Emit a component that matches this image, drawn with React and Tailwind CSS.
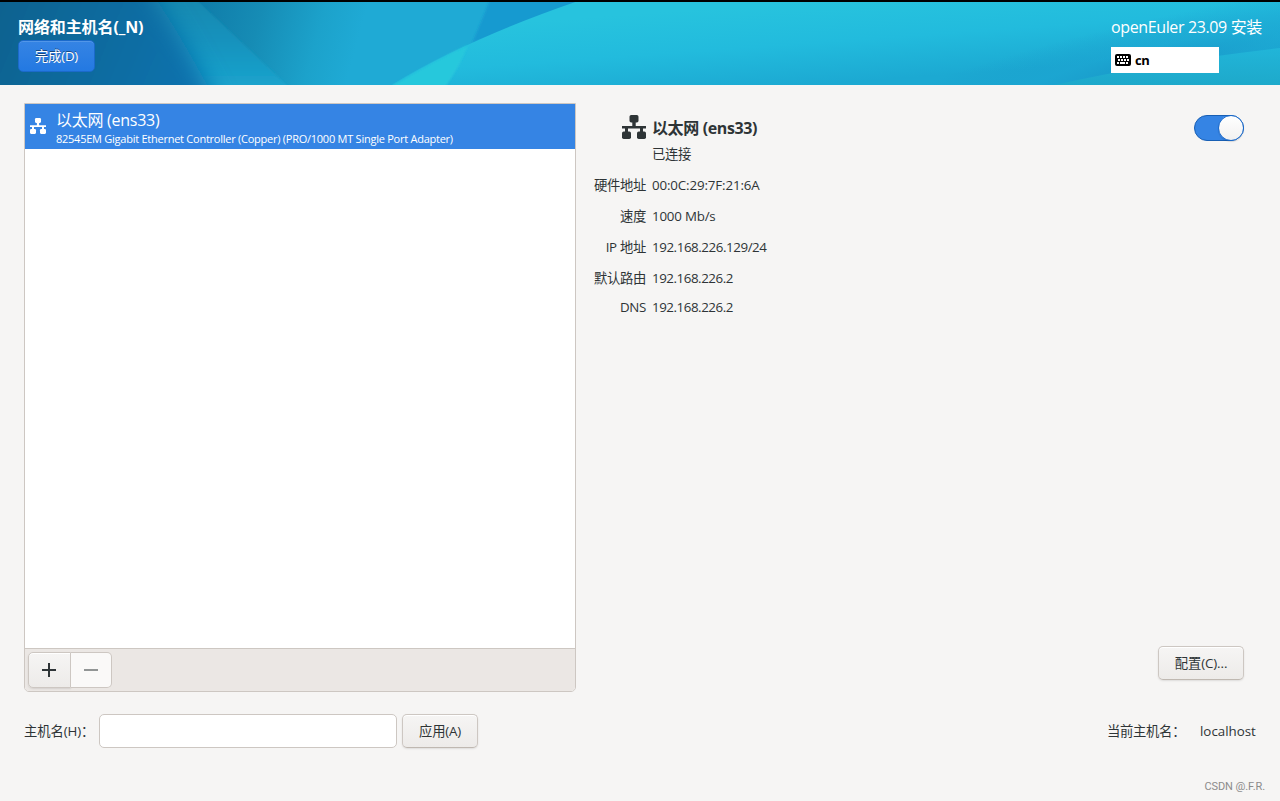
import React from "react";

const details = [
  { label: "硬件地址", value: "00:0C:29:7F:21:6A", row: "h-[31px]", spacing: "tracking-[-0.13px]" },
  { label: "速度", value: "1000 Mb/s", row: "h-[31px]", spacing: "tracking-[-0.2px]" },
  { label: "IP 地址", value: "192.168.226.129/24", row: "h-[31px]", spacing: "tracking-[-0.42px]" },
  { label: "默认路由", value: "192.168.226.2", row: "h-[31px]", spacing: "tracking-[-0.45px]" },
  { label: "DNS", value: "192.168.226.2", row: "h-[27px]", spacing: "tracking-[-0.45px]" },
];

const buttonLook =
  "flex items-center justify-center rounded-[5px] border border-[#cdc7c2] border-b-[#bfb8b1] bg-linear-to-b from-[#f6f5f4] to-[#edebe9] shadow-[0_1px_2px_rgba(0,0,0,0.1),inset_0_1px_0_#ffffff]";

function WiredIcon({ className }) {
  return (
    <svg className={className} viewBox="0 0 24 24" fill="currentColor" aria-hidden="true">
      <rect x="7.5" y="0" width="9" height="7.5" rx="1.7" />
      <rect x="0" y="16.5" width="9" height="7.5" rx="1.7" />
      <rect x="15" y="16.5" width="9" height="7.5" rx="1.7" />
      <path d="M10.3 7h3.4v4H24v2.4h-3v3.6h-3v-3.6H6v3.6H3v-3.6H0V11h10.3z" />
    </svg>
  );
}

function KeyboardIcon() {
  return (
    <svg className="h-3 w-4" viewBox="0 0 16 12" aria-hidden="true">
      <rect width="16" height="12" rx="2" fill="#000" />
      <path
        fill="#fff"
        d="M2 2h2v2H2zM5 2h2v2H5zM8 2h2v2H8zM11 2h2v2h-2zM3 5h2v2H3zM6 5h2v2H6zM9 5h2v2H9zM12 5h2v2h-2zM2 8h2v2H2zM5 8h5v2H5zM11 8h2v2h-2z"
      />
    </svg>
  );
}

function HeaderArt() {
  return (
    <svg className="absolute inset-0 h-full w-full" viewBox="0 0 1280 83" preserveAspectRatio="none" aria-hidden="true">
      <defs>
        <linearGradient id="base" gradientUnits="userSpaceOnUse" x1="150" y1="30" x2="345" y2="85">
          <stop offset="0" stopColor="#0c6fa4" />
          <stop offset="0.27" stopColor="#1180ac" />
          <stop offset="0.5" stopColor="#168cb5" />
          <stop offset="0.8" stopColor="#1ca2cb" />
          <stop offset="1" stopColor="#1faad5" />
        </linearGradient>
        <linearGradient id="beam" x1="0" y1="0" x2="0" y2="1">
          <stop offset="0" stopColor="#1387ad" />
          <stop offset="0.5" stopColor="#1692bd" />
          <stop offset="1" stopColor="#1ba5ce" />
        </linearGradient>
        <linearGradient id="deep" gradientUnits="userSpaceOnUse" x1="0" y1="0" x2="200" y2="83">
          <stop offset="0" stopColor="#09628f" />
          <stop offset="0.5" stopColor="#0b6b9f" />
          <stop offset="1" stopColor="#0c72ae" />
        </linearGradient>
        <linearGradient id="swell" gradientUnits="userSpaceOnUse" x1="800" y1="0" x2="806" y2="83">
          <stop offset="0" stopColor="#27c3de" />
          <stop offset="0.5" stopColor="#22bbdd" />
          <stop offset="1" stopColor="#1ca9d2" />
        </linearGradient>
        <linearGradient id="corner" x1="0" y1="0" x2="0" y2="1">
          <stop offset="0" stopColor="#22b8da" />
          <stop offset="1" stopColor="#1ea9c9" />
        </linearGradient>
        <radialGradient id="dim" gradientUnits="userSpaceOnUse" cx="0" cy="0" r="1" gradientTransform="translate(1150 64) rotate(-13) scale(330 46)">
          <stop offset="0" stopColor="#1894c6" stopOpacity="0.75" />
          <stop offset="0.4" stopColor="#1ba0d0" stopOpacity="0.4" />
          <stop offset="1" stopColor="#1790c4" stopOpacity="0" />
        </radialGradient>
        <filter id="soft" x="-20%" y="-50%" width="140%" height="200%">
          <feGaussianBlur stdDeviation="11" />
        </filter>
        <filter id="edge">
          <feGaussianBlur stdDeviation="1" />
        </filter>
      </defs>
      <rect width="1280" height="83" fill="url(#base)" />
      <path d="M100-12H186Q238 37 292 88H100z" fill="url(#beam)" filter="url(#edge)" />
      <path d="M-60-60H125L158 0Q188 45 232 130H-60z" fill="url(#deep)" filter="url(#soft)" />
      <path d="M491-5H595V5Q525 22 472 41Q482 18 491-5z" fill="#189ad0" filter="url(#edge)" />
      <path d="M390 84Q470 35 590-5H1285V84z" fill="url(#swell)" />
      <path d="M392 84Q430 61 468 43Q460 64 446 84z" fill="#28c8dc" filter="url(#edge)" />
      <rect x="800" width="480" height="83" fill="url(#dim)" />
      <path d="M1050 84Q1150 61 1280 46V84z" fill="url(#corner)" opacity="0.85" />
    </svg>
  );
}

function Header() {
  return (
    <header className="relative h-[85px] border-t-2 border-black text-white">
      <HeaderArt />
      <div className="relative flex h-full items-start justify-between pl-[18px]">
        <div className="flex flex-col pt-[13px]">
          <h1 className="h-[25px] text-[16px] leading-[24px] font-bold tracking-[-0.1px] whitespace-nowrap">网络和主机名(_N)</h1>
          <button className="flex h-[32px] w-[77px] items-center justify-center rounded-[5px] border border-[#1b6acb] bg-linear-to-b from-[#3584e4] to-[#2379e2] pt-[2px] text-[13.33px] tracking-[-0.2px] shadow-[inset_0_1px_0_#5296e8] [text-shadow:0_-1px_rgba(0,0,0,0.45)]">
            完成(D)
          </button>
        </div>
        <div className="flex w-[169px] flex-col pt-[13px]">
          <div className="h-[32px] text-[16px] leading-[24px] tracking-[-0.37px] whitespace-nowrap">openEuler 23.09 安装</div>
          <div className="flex h-[26px] w-[108px] items-center gap-1 bg-white pl-1 text-[13px] font-bold text-black">
            <KeyboardIcon />
            <span className="pt-px tracking-[-0.5px]">cn</span>
          </div>
        </div>
      </div>
    </header>
  );
}

function DeviceList() {
  return (
    <section className="flex h-[589px] w-[552px] flex-col overflow-hidden rounded-b-[5px] border border-[#cdc7c2] bg-white">
      <div className="flex h-[45px] items-center bg-[#3584e4] pl-[5px] text-white">
        <WiredIcon className="mb-[2px] h-4 w-4" />
        <div className="flex flex-col pt-px pl-[10px]">
          <div className="h-[23px] text-[16px] leading-[24px] tracking-[-0.27px] whitespace-nowrap">以太网 (ens33)</div>
          <div className="h-[15px] text-[11px] leading-[15px] tracking-[-0.25px] whitespace-nowrap">
            82545EM Gigabit Ethernet Controller (Copper) (PRO/1000 MT Single Port Adapter)
          </div>
        </div>
      </div>
      <div className="flex-1" />
      <div className="flex h-[43px] items-start border-t border-[#cdc7c2] bg-[#ebe7e4] pt-[3px] pl-[3px]">
        <button className="flex h-[36px] w-[43px] items-center justify-center rounded-l-[5px] border border-[#cdc7c2] bg-linear-to-b from-[#f6f5f4] to-[#edebe9] pr-px shadow-[0_1px_2px_rgba(0,0,0,0.1),inset_0_1px_0_#fff]">
          <svg className="h-[14px] w-[14px]" viewBox="0 0 14 14" fill="#2e3436" aria-hidden="true">
            <path d="M6 0h2v6h6v2H8v6H6V8H0V6h6z" />
          </svg>
        </button>
        <button className="flex h-[36px] w-[41px] items-center justify-center rounded-r-[5px] border border-l-0 border-[#cdc7c2] bg-[#faf9f8]">
          <svg className="h-[14px] w-[14px]" viewBox="0 0 14 14" fill="#929595" aria-hidden="true">
            <path d="M0 6h14v2H0z" />
          </svg>
        </button>
      </div>
    </section>
  );
}

function DeviceDetails() {
  return (
    <section className="flex h-[589px] flex-1 flex-col pr-[18px] pl-[18px]">
      <div className="flex h-[38px] items-start pt-[10px]">
        <div className="flex w-[52px] justify-end pt-[2px]">
          <WiredIcon className="h-6 w-6" />
        </div>
        <h2 className="h-[28px] flex-1 pt-px pl-[6px] text-[16px] leading-[28px] font-bold tracking-[-0.38px] whitespace-nowrap">以太网 (ens33)</h2>
        <div className="mt-[2px] flex h-[26px] w-[50px] items-center justify-end rounded-full border border-[#185fb4] bg-[#3584e4]">
          <div className="-mr-px h-[26px] w-[26px] shrink-0 rounded-full border border-[#1b6acb] bg-linear-to-b from-white to-[#f2f1f0] shadow-[0_1px_1px_rgba(0,0,0,0.12)]" />
        </div>
      </div>
      <div className="flex h-[29px] items-center pb-[2px] pl-[58px] text-[13.33px] tracking-[-0.3px]">已连接</div>
      {details.map((item) => (
        <div key={item.label} className={`flex items-center gap-[6px] text-[13.33px] whitespace-nowrap ${item.row}`}>
          <div className="w-[52px] text-right tracking-[-0.3px]">{item.label}</div>
          <div className={item.spacing}>{item.value}</div>
        </div>
      ))}
      <div className="flex flex-1 items-end justify-end pb-[12px]">
        <button className={`${buttonLook} h-[34px] w-[86px] pt-[2px] text-[13.33px] tracking-[-0.1px]`}>配置(C)...</button>
      </div>
    </section>
  );
}

function HostnameBar() {
  return (
    <div className="mt-[22px] flex h-[34px] items-center text-[13.33px] tracking-[-0.1px]">
      <label htmlFor="hostname" className="w-[75px] pt-[2px] whitespace-nowrap">主机名(H)：</label>
      <input id="hostname" className="h-[34px] w-[298px] rounded-[5px] border border-[#cdc7c2] bg-white px-2 outline-none" />
      <button className={`${buttonLook} ml-[5px] h-[34px] w-[76px] pt-[2px] tracking-[-0.2px]`}>应用(A)</button>
      <div className="ml-auto w-[93px] pt-[2px] tracking-[-0.3px] whitespace-nowrap">当前主机名：</div>
      <div className="w-[56px] pt-[2px] tracking-normal whitespace-nowrap">localhost</div>
    </div>
  );
}

export default function App() {
  return (
    <div className="flex h-[801px] w-[1280px] flex-col overflow-hidden bg-[#f6f5f4] font-['Open_Sans','Noto_Sans_CJK_SC',sans-serif] text-[#2e3436]">
      <Header />
      <main className="flex flex-col pt-[18px] pr-[24px] pl-[24px]">
        <div className="-mr-[6px] flex">
          <DeviceList />
          <DeviceDetails />
        </div>
        <HostnameBar />
      </main>
      <footer className="mt-auto flex h-[28px] items-center justify-end pr-[15px] font-['Roboto',sans-serif] text-[11px] tracking-[-0.1px] text-[#8c8b8b]">
        CSDN @.F.R.
      </footer>
    </div>
  );
}
